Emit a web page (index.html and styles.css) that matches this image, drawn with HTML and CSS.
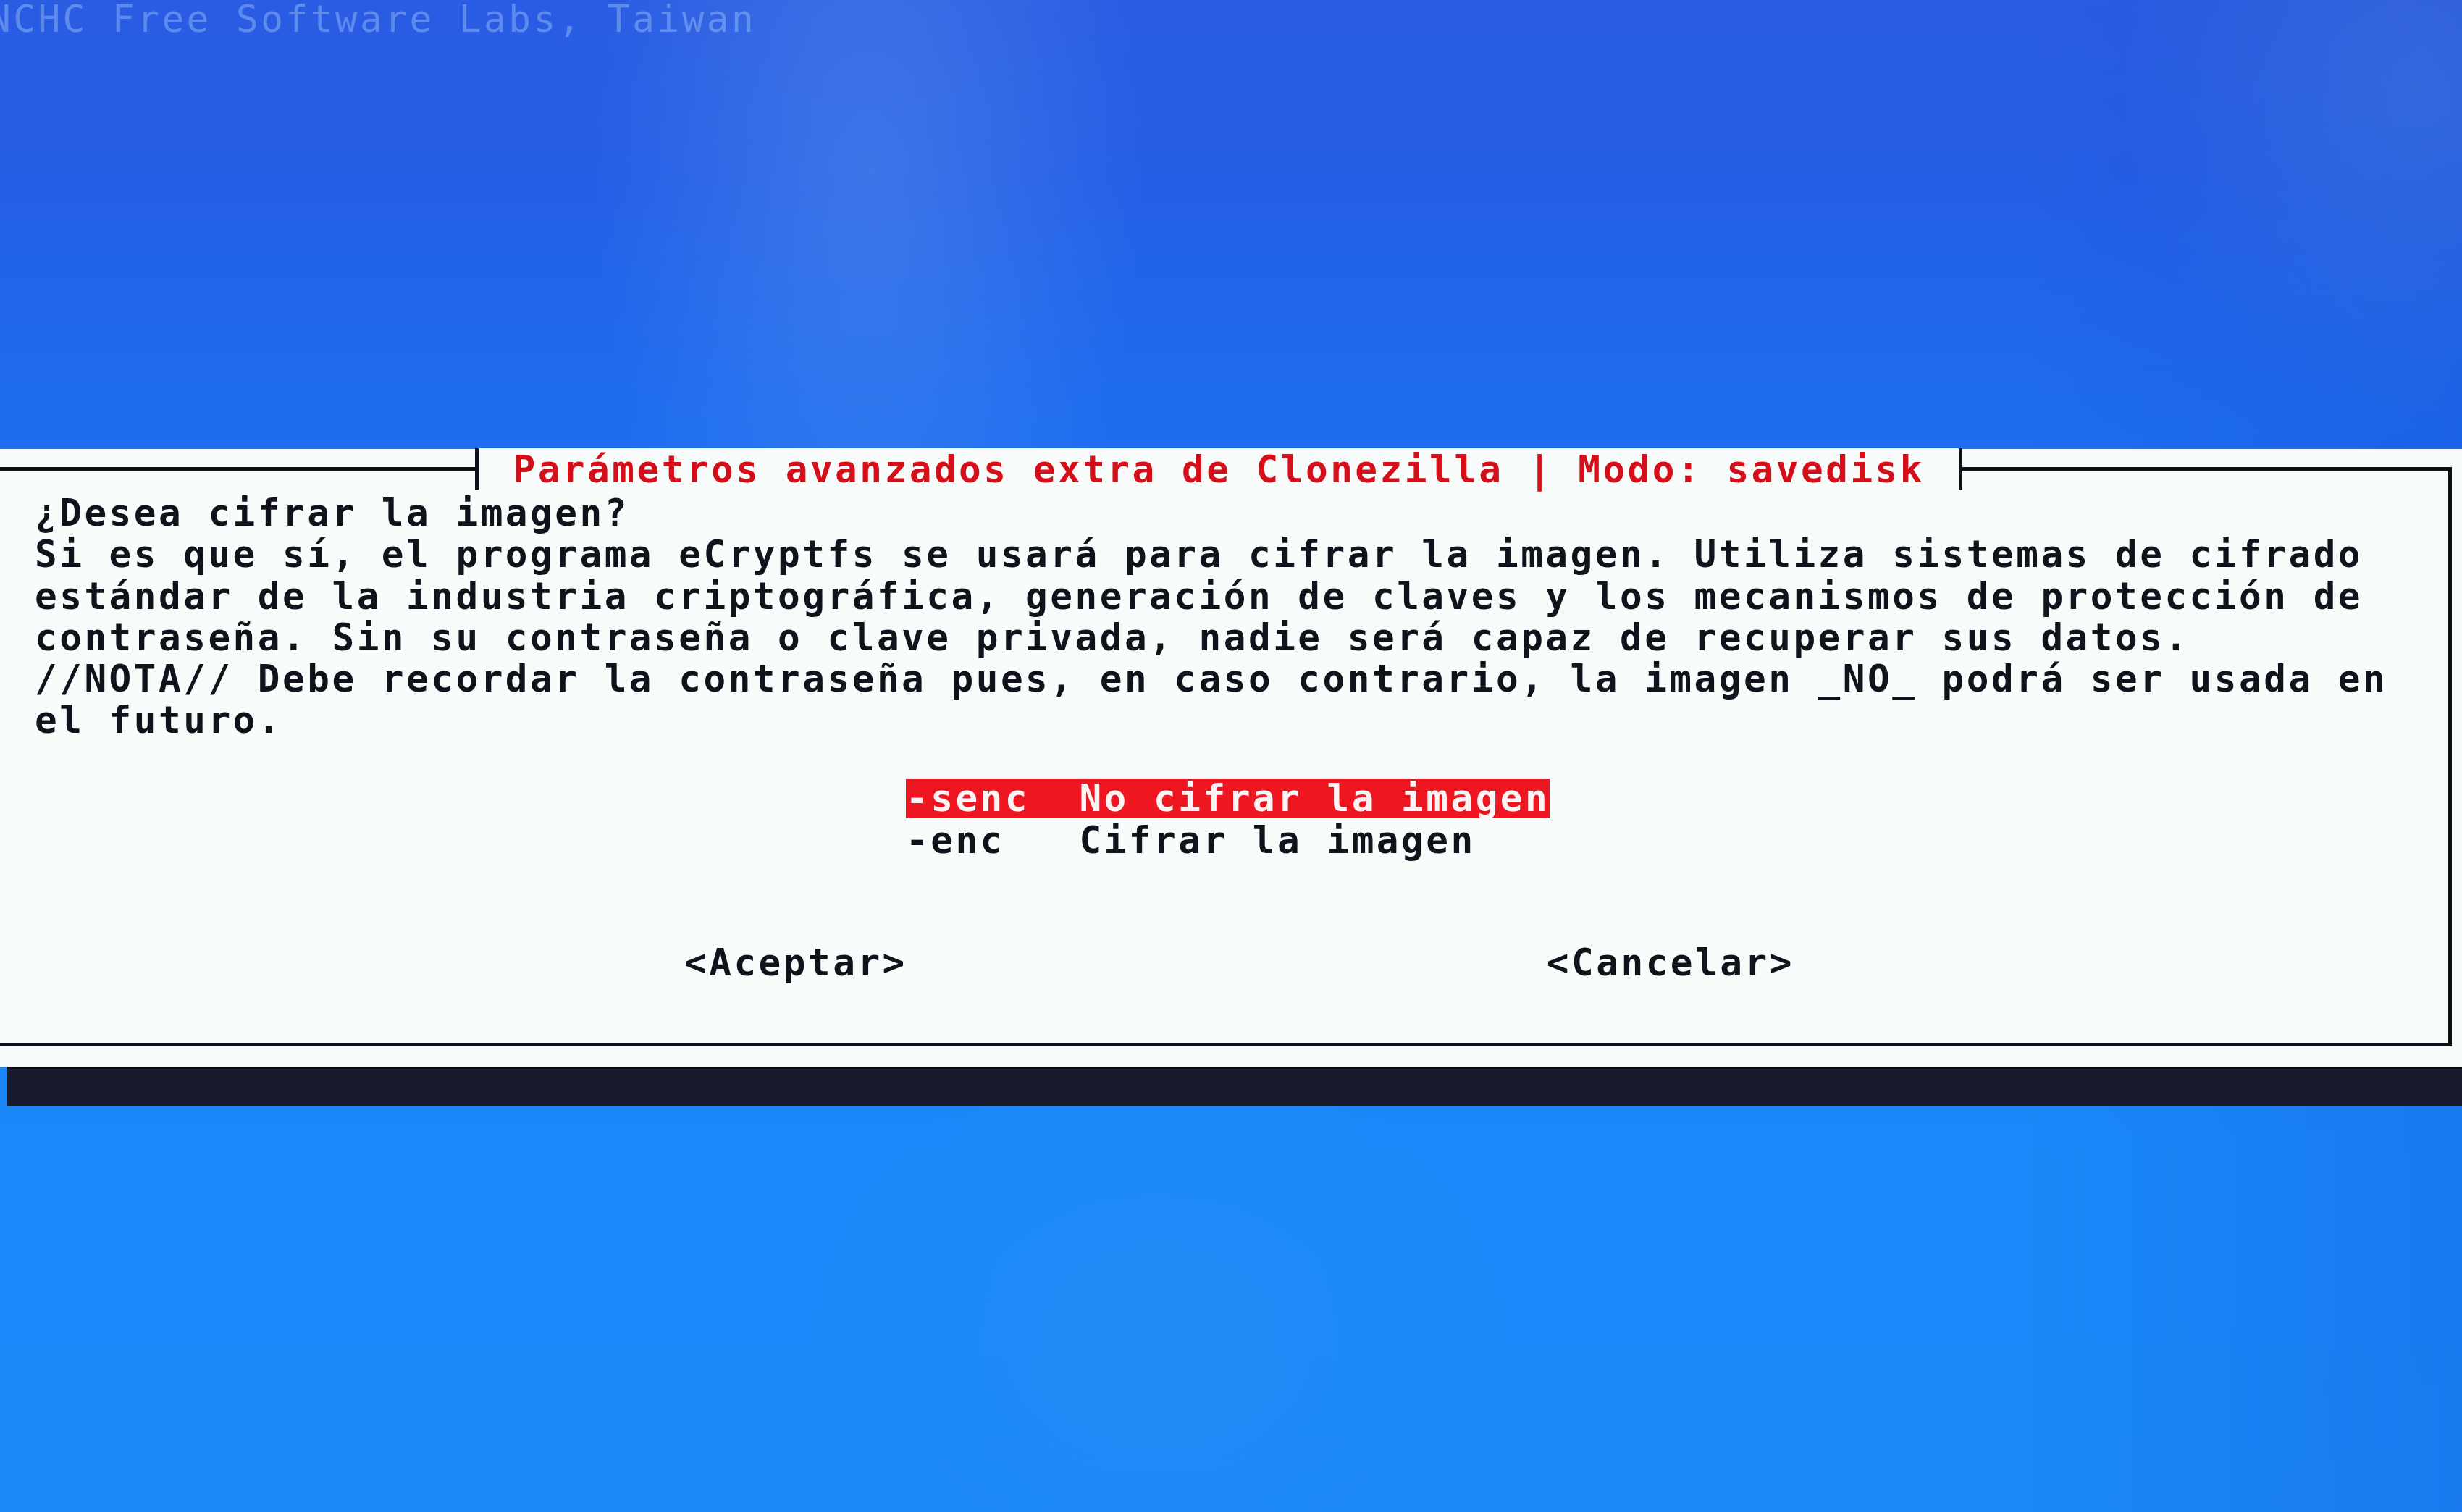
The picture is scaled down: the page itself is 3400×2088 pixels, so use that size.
FILE: index.html
```html
<!DOCTYPE html>
<html lang="es">
<head>
<meta charset="utf-8">
<title>Clonezilla</title>
<link rel="stylesheet" href="styles.css">
</head>
<body>
<div class="screen">
  <div class="brand">NCHC Free Software Labs, Taiwan</div>
  <div class="dialog">
    <div class="box">
      <div class="titlebar"><span class="title">Parámetros avanzados extra de Clonezilla | Modo: savedisk</span></div>
      <div class="msg">
        <div class="line">¿Desea cifrar la imagen?</div>
        <div class="line">Si es que sí, el programa eCryptfs se usará para cifrar la imagen. Utiliza sistemas de cifrado</div>
        <div class="line">estándar de la industria criptográfica, generación de claves y los mecanismos de protección de</div>
        <div class="line">contraseña. Sin su contraseña o clave privada, nadie será capaz de recuperar sus datos.</div>
        <div class="line">//NOTA// Debe recordar la contraseña pues, en caso contrario, la imagen _NO_ podrá ser usada en</div>
        <div class="line">el futuro.</div>
      </div>
      <div class="menu">
        <div class="item sel">-senc  No cifrar la imagen</div>
        <div class="item">-enc   Cifrar la imagen</div>
      </div>
      <div class="buttons">
        <span class="btn">&lt;Aceptar&gt;</span>
        <span class="btn">&lt;Cancelar&gt;</span>
      </div>
    </div>
  </div>
  <div class="shadow"></div>
</div>
</body>
</html>
```

FILE: styles.css
```css
:root {
  --cw: 34.2px;
  --lh: 57.2px;
  --fs: 51px;
  --ls: calc(var(--cw) - 0.602 * var(--fs));
}

html, body {
  margin: 0;
  padding: 0;
}

body {
  background: #1d6cee;
}

.screen {
  width: 3400px;
  height: 2088px;
  overflow: hidden;
  font-family: "DejaVu Sans Mono", "Liberation Mono", monospace;
  font-size: var(--fs);
  letter-spacing: var(--ls);
  line-height: var(--lh);
  background:
    radial-gradient(ellipse 380px 760px at 1200px 240px, rgba(120, 170, 240, 0.30), rgba(120, 170, 240, 0) 100%),
    radial-gradient(ellipse 420px 500px at 3350px 120px, rgba(110, 170, 220, 0.22), rgba(110, 170, 220, 0) 100%),
    radial-gradient(ellipse 500px 400px at 1600px 1850px, rgba(60, 150, 240, 0.22), rgba(60, 150, 240, 0) 100%),
    linear-gradient(90deg, rgba(0, 20, 160, 0) 0%, rgba(0, 20, 160, 0) 82%, rgba(0, 20, 170, 0.12) 100%),
    linear-gradient(180deg, #2a5ce2 0%, #245fe6 12%, #1e6aee 25%, #1a7cf4 50%, #1a88f9 75%, #1b88f7 100%);
}

.brand,
.line,
.item,
.btn,
.title {
  white-space: pre;
}

.brand {
  height: var(--lh);
  margin-top: -2px;
  margin-left: -16px;
  color: rgba(160, 195, 250, 0.45);
}

.dialog {
  margin-top: 565px;
  height: 853px;
  box-sizing: border-box;
  padding: 25px 14px 0 0;
  background: #f7fbfa;
}

.box {
  margin-left: -20px;
  border: 5px solid #101018;
  height: 800px;
  box-sizing: border-box;
  padding-left: 63px;
  font-weight: bold;
}

.titlebar {
  display: flex;
  justify-content: center;
  height: 57px;
  margin-top: -31px;
  margin-left: -63px;
}

.title {
  display: block;
  height: 57px;
  line-height: 60px;
  padding: 0 47px 0 47.5px;
  border-left: 5px solid #101018;
  border-right: 5px solid #101018;
  background: #f7fbfa;
  color: #d40f1a;
}

.msg {
  margin-top: 4px;
  color: #12121c;
}

.line {
  height: var(--lh);
}

.menu {
  margin-top: 53px;
  margin-left: 1203px;
  display: flex;
  flex-direction: column;
  align-items: flex-start;
  gap: 4px;
  color: #12121c;
}

.item {
  height: 54px;
  line-height: 54px;
}

.item.sel {
  background: #ee1620;
  color: #fbf4f4;
}

.buttons {
  margin-top: 113px;
  margin-left: 897px;
  display: flex;
  gap: 883px;
  color: #12121c;
}

.btn {
  line-height: var(--lh);
}

.shadow {
  margin-left: 10px;
  height: 55px;
  background: #171b2c;
  border-top: 3px solid #0b0d16;
  box-sizing: border-box;
}
```
